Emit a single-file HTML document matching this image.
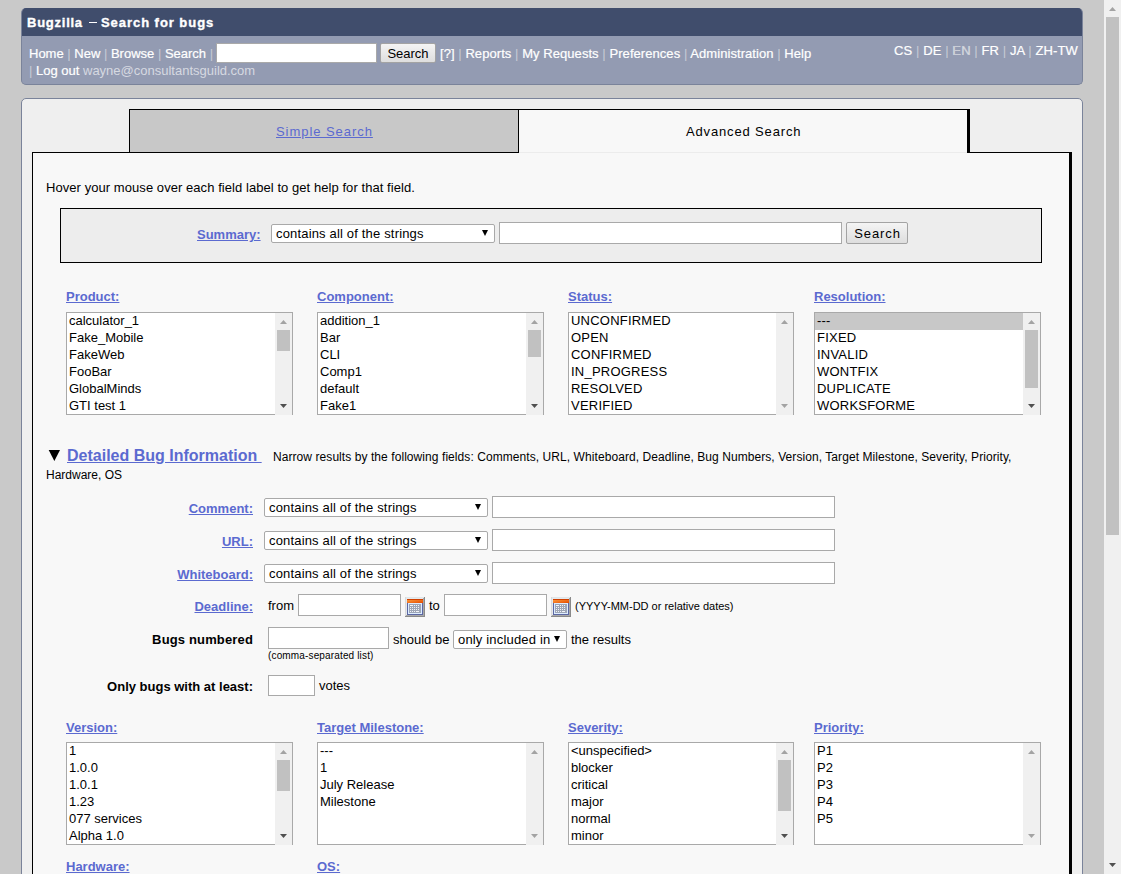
<!DOCTYPE html>
<html><head><meta charset="utf-8"><title>Bugzilla – Search for bugs</title>
<style>
html,body{margin:0;padding:0;}
body{width:1121px;height:874px;overflow:hidden;position:relative;background:#c9c9c9;font-family:"Liberation Sans",sans-serif;font-size:13px;color:#000;}
.a{position:absolute;white-space:nowrap;line-height:15px;}
.lnk{color:#5b6ad0;text-decoration:underline;font-weight:bold;}
.box{position:absolute;box-sizing:border-box;}
/* header */
#hdr{position:absolute;left:21px;top:8px;width:1062px;height:77px;border-radius:5px;overflow:hidden;background:#939bb2;box-sizing:border-box;border:1px solid #7a839a;border-top:none;}
#titlebar{position:absolute;left:-1px;top:0;width:1062px;height:28px;background:#404d6c;}
.nav{color:#fff;-webkit-text-stroke:0.2px #fff;}
.nav .sep{-webkit-text-stroke:0;}
.sep{color:#c7cbd6;}
.inp{position:absolute;box-sizing:border-box;background:#fff;border:1px solid #a9a9a9;}
.btn{position:absolute;box-sizing:border-box;border:1px solid #a3a3a3;border-radius:2px;background:linear-gradient(#f4f4f4,#dedede);color:#000;text-align:center;}
.sel{position:absolute;box-sizing:border-box;background:#fff;border:1px solid #a9a9a9;border-radius:2px;}
.sel .t{position:absolute;left:4px;top:1px;line-height:15px;white-space:nowrap;letter-spacing:0.17px;}
.sel .ar{position:absolute;right:6px;top:5px;width:0;height:0;border-left:3.5px solid transparent;border-right:3.5px solid transparent;border-top:6px solid #000;}
.lb{position:absolute;box-sizing:border-box;background:#fff;border:1px solid #a9a9a9;}
.lb .it{position:absolute;left:2px;height:17px;line-height:17px;white-space:nowrap;margin-top:-1px;}
.lb .sb{position:absolute;right:0;top:0;width:17px;bottom:-1px;background:#f0f0f0;}
.lb .th{position:absolute;left:2px;width:13px;background:#c1c1c1;}
.lb .up{position:absolute;left:5px;top:7px;}
.lb .dn{position:absolute;left:5px;top:91px;}
.cal{position:absolute;width:20px;height:20px;box-sizing:border-box;border:2px solid;border-color:#e8eef2 #8a8a8a #8a8a8a #e0e0e0;background:#fff;}
.cal:before{content:"";position:absolute;left:1px;top:1px;width:14px;height:4px;background:linear-gradient(#ff9a2e,#e85a00);}
.cal:after{content:"";position:absolute;left:1px;top:5px;width:12px;height:10px;border:1px solid #5d6aa0;border-top:none;background:#9ca5b8;box-shadow:inset 0 0 0 1px #dbe8f7;}
.caps .it{letter-spacing:0.22px;}
</style></head><body>

<!-- HEADER -->
<div id="hdr">
  <div id="titlebar"></div>
</div>
<div class="a" style="left:27px;top:15px;color:#fff;font-weight:bold;font-size:13px;letter-spacing:0.75px;-webkit-text-stroke:0.35px #fff;">Bugzilla</div>
<div class="box" style="left:89px;top:22px;width:8px;height:1px;background:#fff;"></div>
<div class="a" style="left:101px;top:15px;color:#fff;font-weight:bold;font-size:13px;letter-spacing:0.95px;-webkit-text-stroke:0.35px #fff;">Search for bugs</div>
<div class="a nav" style="left:29px;top:46px;">Home <span class="sep">|</span> New <span class="sep">|</span> Browse <span class="sep">|</span> Search <span class="sep">|</span></div>
<div class="inp" style="left:216px;top:43px;width:161px;height:20px;"></div>
<div class="btn" style="left:380px;top:43px;width:56px;height:20px;line-height:20px;">Search</div>
<div class="a nav" style="left:440px;top:46px;letter-spacing:0.06px;">[?] <span class="sep">|</span> Reports <span class="sep">|</span> My Requests <span class="sep">|</span> Preferences <span class="sep">|</span> Administration <span class="sep">|</span> Help</div>
<div class="a nav" style="left:29px;top:63px;"><span class="sep">|</span> Log out <span style="color:#d6d9e1;-webkit-text-stroke:0;">wayne@consultantsguild.com</span></div>
<div class="a nav" style="left:894px;top:43px;letter-spacing:0.1px;">CS <span class="sep">|</span> DE <span class="sep">|</span> <span style="color:#c9ccd6">EN</span> <span class="sep">|</span> FR <span class="sep">|</span> JA <span class="sep">|</span> ZH-TW</div>

<!-- BODY BOX -->
<div class="box" style="left:21px;top:98px;width:1062px;height:800px;background:#efefef;border:1px solid #7a839a;border-radius:5px;"></div>

<!-- TABS + CONTENT -->
<div class="box" style="left:129px;top:109px;width:390px;height:44px;background:#c8c8c8;"></div>
<div class="box" style="left:519px;top:109px;width:450px;height:44px;background:#f8f8f8;"></div>
<div class="box" style="left:32px;top:152px;width:1040px;height:722px;background:#f8f8f8;"></div>
<div class="box" style="left:519px;top:152px;width:448px;height:1px;background:#ececec;"></div>
<div class="box" style="left:129px;top:109px;width:841px;height:1px;background:#000;"></div>
<div class="box" style="left:129px;top:109px;width:1px;height:44px;background:#000;"></div>
<div class="box" style="left:518px;top:109px;width:1px;height:44px;background:#000;"></div>
<div class="box" style="left:967px;top:109px;width:3px;height:44px;background:#000;"></div>
<div class="box" style="left:32px;top:152px;width:487px;height:1px;background:#000;"></div>
<div class="box" style="left:967px;top:152px;width:105px;height:1px;background:#000;"></div>
<div class="box" style="left:32px;top:152px;width:1px;height:722px;background:#000;"></div>
<div class="box" style="left:1069px;top:152px;width:3px;height:722px;background:#000;"></div>
<div class="a" style="left:276px;top:124px;color:#5b6ad0;text-decoration:underline;letter-spacing:0.95px;">Simple Search</div>
<div class="a" style="left:686px;top:124px;letter-spacing:0.85px;">Advanced Search</div>

<div class="a" style="left:46px;top:180px;letter-spacing:0.06px;">Hover your mouse over each field label to get help for that field.</div>

<!-- SUMMARY -->
<div class="box" style="left:60px;top:208px;width:982px;height:55px;background:#ededed;border:1px solid #000;"></div>
<div class="a lnk" style="left:197px;top:227px;">Summary:</div>
<div class="sel" style="left:271px;top:224px;width:224px;height:19px;"><div class="t">contains all of the strings</div><div class="ar"></div></div>
<div class="inp" style="left:499px;top:222px;width:343px;height:22px;"></div>
<div class="btn" style="left:846px;top:222px;width:62px;height:22px;line-height:22px;letter-spacing:0.9px;text-indent:1px;">Search</div>

<div class="a lnk" style="left:66px;top:289px;">Product:</div>
<div class="lb" style="left:66px;top:312px;width:227px;height:103px;"><div class="it" style="top:0px;">calculator_1</div><div class="it" style="top:17px;">Fake_Mobile</div><div class="it" style="top:34px;">FakeWeb</div><div class="it" style="top:51px;">FooBar</div><div class="it" style="top:68px;">GlobalMinds</div><div class="it" style="top:85px;">GTI test 1</div><div class="sb"><svg class="up" width="7" height="4"><polygon points="0,4 7,4 3.5,0" fill="#a3a3a3"/></svg><div class="th" style="top:17px;height:21px;"></div><svg class="dn" width="7" height="4"><polygon points="0,0 7,0 3.5,4" fill="#505050"/></svg></div></div>
<div class="a lnk" style="left:317px;top:289px;">Component:</div>
<div class="lb" style="left:317px;top:312px;width:227px;height:103px;"><div class="it" style="top:0px;">addition_1</div><div class="it" style="top:17px;">Bar</div><div class="it" style="top:34px;">CLI</div><div class="it" style="top:51px;">Comp1</div><div class="it" style="top:68px;">default</div><div class="it" style="top:85px;">Fake1</div><div class="sb"><svg class="up" width="7" height="4"><polygon points="0,4 7,4 3.5,0" fill="#a3a3a3"/></svg><div class="th" style="top:17px;height:27px;"></div><svg class="dn" width="7" height="4"><polygon points="0,0 7,0 3.5,4" fill="#505050"/></svg></div></div>
<div class="a lnk" style="left:568px;top:289px;">Status:</div>
<div class="lb caps" style="left:568px;top:312px;width:226px;height:103px;"><div class="it" style="top:0px;">UNCONFIRMED</div><div class="it" style="top:17px;">OPEN</div><div class="it" style="top:34px;">CONFIRMED</div><div class="it" style="top:51px;">IN_PROGRESS</div><div class="it" style="top:68px;">RESOLVED</div><div class="it" style="top:85px;">VERIFIED</div><div class="sb"><svg class="up" width="7" height="4"><polygon points="0,4 7,4 3.5,0" fill="#a3a3a3"/></svg><svg class="dn" width="7" height="4"><polygon points="0,0 7,0 3.5,4" fill="#a3a3a3"/></svg></div></div>
<div class="a lnk" style="left:814px;top:289px;">Resolution:</div>
<div class="lb caps" style="left:814px;top:312px;width:227px;height:103px;"><div style="position:absolute;left:0;top:0px;right:17px;height:17px;background:#c8c8c8;"></div><div class="it" style="top:0px;">---</div><div class="it" style="top:17px;">FIXED</div><div class="it" style="top:34px;">INVALID</div><div class="it" style="top:51px;">WONTFIX</div><div class="it" style="top:68px;">DUPLICATE</div><div class="it" style="top:85px;">WORKSFORME</div><div class="sb"><svg class="up" width="7" height="4"><polygon points="0,4 7,4 3.5,0" fill="#a3a3a3"/></svg><div class="th" style="top:17px;height:58px;"></div><svg class="dn" width="7" height="4"><polygon points="0,0 7,0 3.5,4" fill="#505050"/></svg></div></div>
<div class="a lnk" style="left:66px;top:720px;">Version:</div>
<div class="lb" style="left:66px;top:742px;width:227px;height:103px;"><div class="it" style="top:0px;">1</div><div class="it" style="top:17px;">1.0.0</div><div class="it" style="top:34px;">1.0.1</div><div class="it" style="top:51px;">1.23</div><div class="it" style="top:68px;">077 services</div><div class="it" style="top:85px;">Alpha 1.0</div><div class="sb"><svg class="up" width="7" height="4"><polygon points="0,4 7,4 3.5,0" fill="#a3a3a3"/></svg><div class="th" style="top:17px;height:31px;"></div><svg class="dn" width="7" height="4"><polygon points="0,0 7,0 3.5,4" fill="#505050"/></svg></div></div>
<div class="a lnk" style="left:317px;top:720px;">Target Milestone:</div>
<div class="lb" style="left:317px;top:742px;width:227px;height:103px;"><div class="it" style="top:0px;">---</div><div class="it" style="top:17px;">1</div><div class="it" style="top:34px;">July Release</div><div class="it" style="top:51px;">Milestone</div><div class="sb"><svg class="up" width="7" height="4"><polygon points="0,4 7,4 3.5,0" fill="#a3a3a3"/></svg><svg class="dn" width="7" height="4"><polygon points="0,0 7,0 3.5,4" fill="#a3a3a3"/></svg></div></div>
<div class="a lnk" style="left:568px;top:720px;">Severity:</div>
<div class="lb" style="left:568px;top:742px;width:226px;height:103px;"><div class="it" style="top:0px;">&lt;unspecified&gt;</div><div class="it" style="top:17px;">blocker</div><div class="it" style="top:34px;">critical</div><div class="it" style="top:51px;">major</div><div class="it" style="top:68px;">normal</div><div class="it" style="top:85px;">minor</div><div class="sb"><svg class="up" width="7" height="4"><polygon points="0,4 7,4 3.5,0" fill="#a3a3a3"/></svg><div class="th" style="top:17px;height:51px;"></div><svg class="dn" width="7" height="4"><polygon points="0,0 7,0 3.5,4" fill="#505050"/></svg></div></div>
<div class="a lnk" style="left:814px;top:720px;">Priority:</div>
<div class="lb" style="left:814px;top:742px;width:227px;height:103px;"><div class="it" style="top:0px;">P1</div><div class="it" style="top:17px;">P2</div><div class="it" style="top:34px;">P3</div><div class="it" style="top:51px;">P4</div><div class="it" style="top:68px;">P5</div><div class="sb"><svg class="up" width="7" height="4"><polygon points="0,4 7,4 3.5,0" fill="#a3a3a3"/></svg><svg class="dn" width="7" height="4"><polygon points="0,0 7,0 3.5,4" fill="#a3a3a3"/></svg></div></div>
<div class="a lnk" style="left:66px;top:859px;">Hardware:</div>
<div class="a lnk" style="left:317px;top:859px;">OS:</div>

<!-- DETAILED -->
<svg style="position:absolute;left:0;top:0;" width="70" height="470"><polygon points="48.7,450 60,450 54.35,461" fill="#000"/></svg>
<div class="a lnk" style="left:67px;top:447px;font-size:16px;line-height:18px;">Detailed Bug Information&nbsp;</div>
<div class="a" style="left:273px;top:450px;font-size:12px;letter-spacing:0.07px;">Narrow results by the following fields: Comments, URL, Whiteboard, Deadline, Bug Numbers, Version, Target Milestone, Severity, Priority,</div>
<div class="a" style="left:46px;top:468px;font-size:12px;">Hardware, OS</div>

<!-- FORM ROWS -->
<div class="a lnk" style="right:868px;top:501px;">Comment:</div>
<div class="sel" style="left:264px;top:498px;width:224px;height:19px;"><div class="t">contains all of the strings</div><div class="ar"></div></div>
<div class="inp" style="left:492px;top:496px;width:343px;height:22px;"></div>

<div class="a lnk" style="right:868px;top:534px;">URL:</div>
<div class="sel" style="left:264px;top:531px;width:224px;height:19px;"><div class="t">contains all of the strings</div><div class="ar"></div></div>
<div class="inp" style="left:492px;top:529px;width:343px;height:22px;"></div>

<div class="a lnk" style="right:868px;top:567px;">Whiteboard:</div>
<div class="sel" style="left:264px;top:564px;width:224px;height:19px;"><div class="t">contains all of the strings</div><div class="ar"></div></div>
<div class="inp" style="left:492px;top:562px;width:343px;height:22px;"></div>

<div class="a lnk" style="right:868px;top:599px;">Deadline:</div>
<div class="a" style="left:268px;top:598px;">from</div>
<div class="inp" style="left:298px;top:594px;width:103px;height:22px;"></div>
<div style="position:absolute;left:405px;top:597px;width:20px;height:20px;"><svg width="20" height="20" viewBox="0 0 20 20"><defs><linearGradient id="og" x1="0" y1="0" x2="1" y2="1"><stop offset="0" stop-color="#ffa040"/><stop offset="1" stop-color="#e44c00"/></linearGradient></defs><rect x="0" y="0" width="20" height="20" fill="#e6e9ec"/><rect x="0" y="0" width="20" height="1" fill="#dfe6ea"/><rect x="0" y="0" width="1" height="20" fill="#dadada"/><rect x="19" y="0" width="1" height="20" fill="#8a8a8a"/><rect x="0" y="19" width="20" height="1" fill="#8a8a8a"/><rect x="18" y="1" width="1" height="18" fill="#a8a8a8"/><rect x="1" y="18" width="18" height="1" fill="#a8a8a8"/><rect x="2" y="2" width="16" height="4" fill="url(#og)"/><rect x="2" y="2" width="16" height="1" fill="#d04000"/><rect x="2" y="6" width="16" height="12" fill="#5b67a3"/><rect x="3" y="6" width="14" height="11" fill="#dcecff"/><rect x="4" y="7" width="12" height="9" fill="#9ea6b6"/><g fill="#f2f4f8"><rect x="5" y="8" width="3" height="1"/><rect x="9" y="8" width="1" height="1"/><rect x="11" y="8" width="1" height="1"/><rect x="13" y="8" width="1" height="1"/><rect x="5" y="10" width="1" height="1"/><rect x="7" y="10" width="1" height="1"/><rect x="9" y="10" width="1" height="1"/><rect x="11" y="10" width="1" height="1"/><rect x="13" y="10" width="1" height="1"/><rect x="5" y="12" width="1" height="1"/><rect x="7" y="12" width="1" height="1"/><rect x="9" y="12" width="1" height="1"/><rect x="11" y="12" width="1" height="1"/><rect x="13" y="12" width="1" height="1"/><rect x="5" y="14" width="1" height="1"/><rect x="7" y="14" width="1" height="1"/><rect x="9" y="14" width="1" height="1"/><rect x="11" y="14" width="3" height="1"/></g></svg></div>
<div class="a" style="left:429px;top:598px;">to</div>
<div class="inp" style="left:444px;top:594px;width:103px;height:22px;"></div>
<div style="position:absolute;left:551px;top:597px;width:20px;height:20px;"><svg width="20" height="20" viewBox="0 0 20 20"><defs><linearGradient id="og2" x1="0" y1="0" x2="1" y2="1"><stop offset="0" stop-color="#ffa040"/><stop offset="1" stop-color="#e44c00"/></linearGradient></defs><rect x="0" y="0" width="20" height="20" fill="#e6e9ec"/><rect x="0" y="0" width="20" height="1" fill="#dfe6ea"/><rect x="0" y="0" width="1" height="20" fill="#dadada"/><rect x="19" y="0" width="1" height="20" fill="#8a8a8a"/><rect x="0" y="19" width="20" height="1" fill="#8a8a8a"/><rect x="18" y="1" width="1" height="18" fill="#a8a8a8"/><rect x="1" y="18" width="18" height="1" fill="#a8a8a8"/><rect x="2" y="2" width="16" height="4" fill="url(#og2)"/><rect x="2" y="2" width="16" height="1" fill="#d04000"/><rect x="2" y="6" width="16" height="12" fill="#5b67a3"/><rect x="3" y="6" width="14" height="11" fill="#dcecff"/><rect x="4" y="7" width="12" height="9" fill="#9ea6b6"/><g fill="#f2f4f8"><rect x="5" y="8" width="3" height="1"/><rect x="9" y="8" width="1" height="1"/><rect x="11" y="8" width="1" height="1"/><rect x="13" y="8" width="1" height="1"/><rect x="5" y="10" width="1" height="1"/><rect x="7" y="10" width="1" height="1"/><rect x="9" y="10" width="1" height="1"/><rect x="11" y="10" width="1" height="1"/><rect x="13" y="10" width="1" height="1"/><rect x="5" y="12" width="1" height="1"/><rect x="7" y="12" width="1" height="1"/><rect x="9" y="12" width="1" height="1"/><rect x="11" y="12" width="1" height="1"/><rect x="13" y="12" width="1" height="1"/><rect x="5" y="14" width="1" height="1"/><rect x="7" y="14" width="1" height="1"/><rect x="9" y="14" width="1" height="1"/><rect x="11" y="14" width="3" height="1"/></g></svg></div>
<div class="a" style="left:575px;top:599px;font-size:11px;">(YYYY-MM-DD or relative dates)</div>

<div class="a" style="right:868px;top:632px;font-weight:bold;letter-spacing:0.15px;">Bugs numbered</div>
<div class="inp" style="left:268px;top:627px;width:121px;height:22px;"></div>
<div class="a" style="left:393px;top:632px;">should be</div>
<div class="sel" style="left:453px;top:630px;width:114px;height:19px;"><div class="t">only included in</div><div class="ar"></div></div>
<div class="a" style="left:571px;top:632px;">the results</div>
<div class="a" style="left:268px;top:650px;font-size:10px;line-height:11px;letter-spacing:0.15px;">(comma-separated list)</div>

<div class="a" style="right:868px;top:679px;font-weight:bold;">Only bugs with at least:</div>
<div class="inp" style="left:268px;top:675px;width:47px;height:21px;"></div>
<div class="a" style="left:319px;top:678px;">votes</div>

<!-- SCROLLBAR -->
<div class="box" style="left:1104px;top:0;width:17px;height:874px;background:#f0f0f0;"></div>
<div class="box" style="left:1106px;top:17px;width:13px;height:518px;background:#c1c1c1;"></div>
<svg style="position:absolute;left:1109px;top:7px;" width="7" height="4"><polygon points="0,4 7,4 3.5,0" fill="#a3a3a3"/></svg>
<svg style="position:absolute;left:1109px;top:863px;" width="7" height="4"><polygon points="0,0 7,0 3.5,4" fill="#505050"/></svg>
</body></html>
